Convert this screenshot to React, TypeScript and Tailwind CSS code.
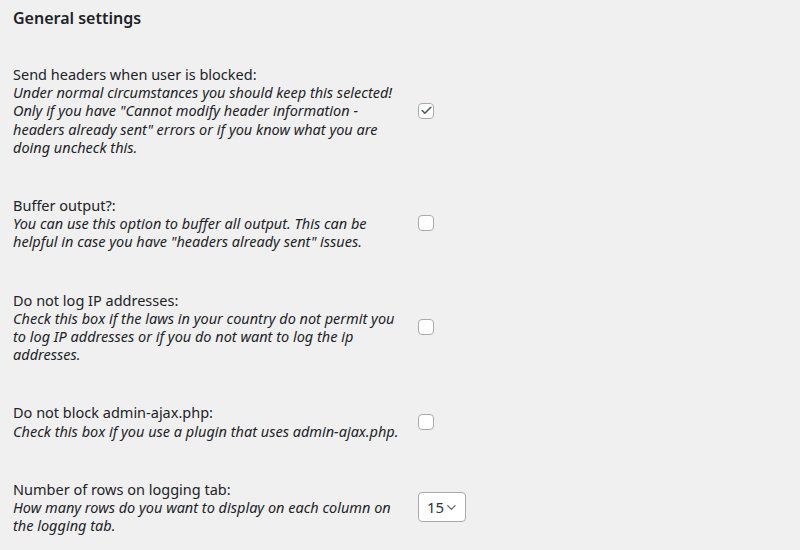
import { Check, ChevronDown } from "lucide-react";

interface Setting {
  label: string;
  help: string;
  kind: "checkbox" | "select";
  checked?: boolean;
  value?: string;
}

const settings: Setting[] = [
  {
    label: "Send headers when user is blocked:",
    help: 'Under normal circumstances you should keep this selected! Only if you have "Cannot modify header information - headers already sent" errors or if you know what you are doing uncheck this.',
    kind: "checkbox",
    checked: true,
  },
  {
    label: "Buffer output?:",
    help: 'You can use this option to buffer all output. This can be helpful in case you have "headers already sent" issues.',
    kind: "checkbox",
  },
  {
    label: "Do not log IP addresses:",
    help: "Check this box if the laws in your country do not permit you to log IP addresses or if you do not want to log the ip addresses.",
    kind: "checkbox",
  },
  {
    label: "Do not block admin-ajax.php:",
    help: "Check this box if you use a plugin that uses admin-ajax.php.",
    kind: "checkbox",
  },
  {
    label: "Number of rows on logging tab:",
    help: "How many rows do you want to display on each column on the logging tab.",
    kind: "select",
    value: "15",
  },
];

function Checkbox({ checked }: { checked?: boolean }) {
  return (
    <span className="flex h-4 w-4 items-center justify-center rounded-[4px] border border-[#a7aaad] bg-white">
      {checked && <Check size={13} strokeWidth={3} className="text-[#50575e]" />}
    </span>
  );
}

function Select({ value }: { value?: string }) {
  return (
    <span className="flex h-[30px] w-[48px] items-center justify-between rounded-[4px] border border-[#a7aaad] bg-white pl-[8px] pr-[6px] text-[15px] text-[#2c3338]">
      {value}
      <ChevronDown size={15} strokeWidth={1.75} className="text-[#50575e]" />
    </span>
  );
}

export default function App() {
  return (
    <div
      className="min-h-[550px] w-[800px] bg-[#f0f0f1] px-[13px] text-[#1d2327]"
      style={{ fontFamily: '"Noto Sans", "Open Sans", sans-serif' }}
    >
      <h2 className="pt-[7px] pb-[15px] text-[16px] font-semibold leading-[23px]">General settings</h2>

      {settings.map((s) => (
        <div key={s.label} className="flex items-center py-5">
          <div className="w-[395px] text-[14.5px] leading-[18.2px]">
            <div>{s.label}</div>
            <div className="italic">{s.help}</div>
          </div>
          <div className="pl-[10px]">
            {s.kind === "checkbox" ? <Checkbox checked={s.checked} /> : <Select value={s.value} />}
          </div>
        </div>
      ))}
    </div>
  );
}
